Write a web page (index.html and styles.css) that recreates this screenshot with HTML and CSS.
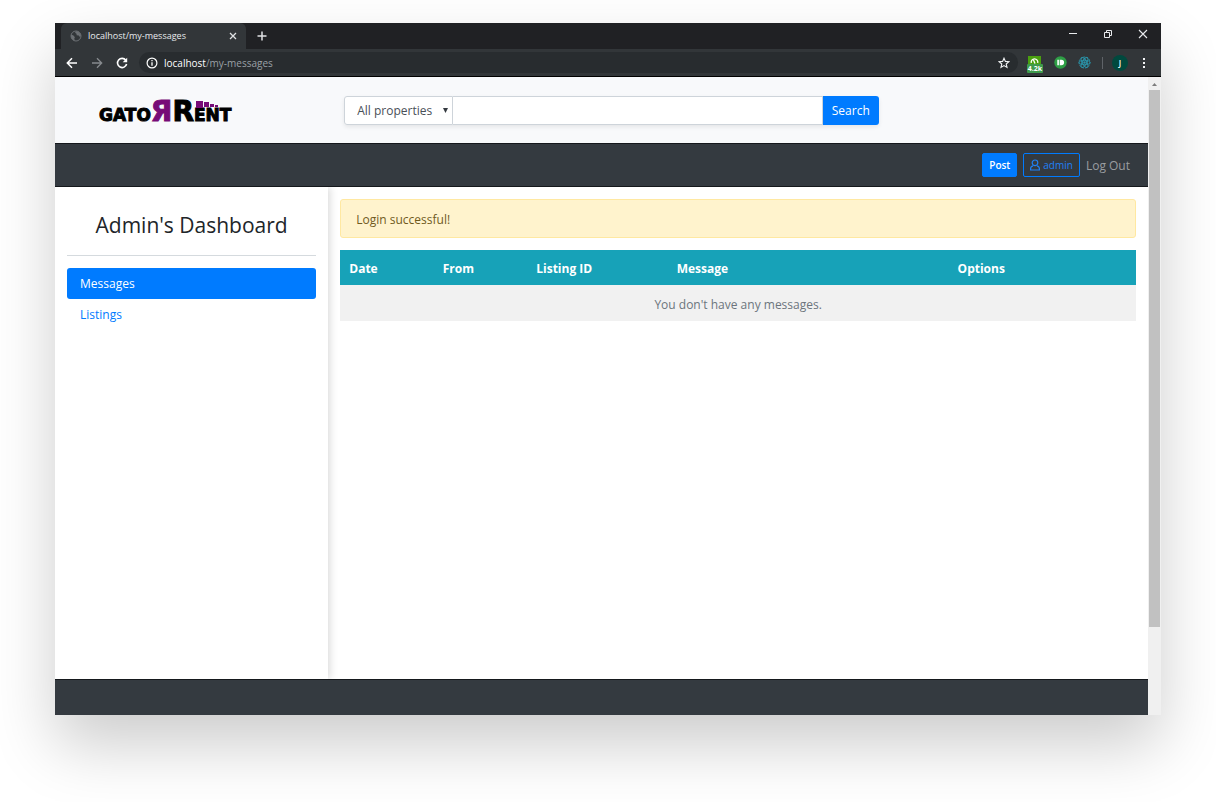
FILE: index.html
```html
<!DOCTYPE html>
<html lang="en">
<head>
<meta charset="utf-8">
<meta name="viewport" content="width=device-width, initial-scale=1">
<title>GatorRent - Messages</title>
<link rel="stylesheet" href="styles.css">
</head>
<body>
<div class="window">
  <div class="tabstrip">
    <div class="tab">
      <svg class="tab-icon" width="12" height="12" viewBox="0 0 12 12"><circle cx="6" cy="6" r="5" fill="none" stroke="#6c7074"/><path d="M1.200 4.500l2.300 1 1.400 1.800-.6 1.200.5 2.200C2.500 10.200 1 8.300 1 6zM6 1.200l-1 1.600 1.500 1 .2 1.400 2 .3 1.200 1.500 1-1.300C10.700 3 8.600 1.300 6 1.200z" fill="#6c7074"/></svg>
      <span class="tab-title">localhost/my-messages</span>
      <button class="icon-btn" aria-label="Close tab"><svg width="8" height="8" viewBox="0 0 8 8"><path d="M1 1l6 6M7 1L1 7" stroke="#dfe1e3" stroke-width="1.300"/></svg></button>
    </div>
    <button class="icon-btn new-tab" aria-label="New tab"><svg width="10" height="10" viewBox="0 0 10 10"><path d="M5 .5v9M.5 5h9" stroke="#dfe1e3" stroke-width="1.500"/></svg></button>
    <div class="window-controls">
      <button class="icon-btn" aria-label="Minimize"><svg width="10" height="10" viewBox="0 0 10 10"><path d="M1 4.500h8" stroke="#e8eaed"/></svg></button>
      <button class="icon-btn" aria-label="Restore"><svg width="10" height="10" viewBox="0 0 10 10"><path d="M1.500 3.500h5v5h-5zM3.500 3.500v-2h5v5h-2" fill="none" stroke="#e8eaed"/></svg></button>
      <button class="icon-btn" aria-label="Close"><svg width="10" height="10" viewBox="0 0 10 10"><path d="M1 1l8 8M9 1L1 9" stroke="#e8eaed" stroke-width="1.100"/></svg></button>
    </div>
  </div>
  <div class="toolbar">
    <div class="nav-buttons">
      <button class="icon-btn" aria-label="Back"><svg width="12" height="12" viewBox="0 0 12 12"><path d="M11 6H1.500M6 1.200L1.300 6 6 10.800" fill="none" stroke="#fff" stroke-width="1.500"/></svg></button>
      <button class="icon-btn" aria-label="Forward"><svg width="12" height="12" viewBox="0 0 12 12"><path d="M1 6h9.500M6 1.200L10.700 6 6 10.800" fill="none" stroke="#878b8f" stroke-width="1.300"/></svg></button>
      <button class="icon-btn" aria-label="Reload"><svg width="12" height="12" viewBox="0 0 12 12"><path d="M9.800 3.200A4.600 4.600 0 1 0 10.600 7" fill="none" stroke="#fff" stroke-width="1.600"/><path d="M11.200.8v4.500H6.700z" fill="#fff"/></svg></button>
    </div>
    <div class="address">
      <svg width="12" height="12" viewBox="0 0 12 12"><circle cx="6" cy="6" r="4.900" fill="none" stroke="#fff" stroke-width="1.200"/><path d="M6 5.200v3.600M6 3v1.300" stroke="#fff" stroke-width="1.300"/></svg>
      <span class="url"><span class="host">localhost</span>/my-messages</span>
      <button class="icon-btn" aria-label="Bookmark"><svg width="12" height="12" viewBox="0 0 12 12"><path d="M6 1.200l1.400 3.200 3.500.3-2.700 2.300.8 3.400-3-1.800-3 1.800.8-3.400L1.100 4.700l3.500-.3z" fill="none" stroke="#f1f3f4" stroke-width="1.100"/></svg></button>
    </div>
    <div class="extensions">
      <div class="ext-meter">
        <svg width="13" height="8" viewBox="0 0 13 8"><path d="M0 0h13v8H0z" fill="#4aa00f"/><path d="M3.300 7A3.300 3.300 0 1 1 9.700 7" fill="none" stroke="#fff" stroke-width="1.300"/><path d="M7 7.500L5.300 3.500" stroke="#fff" stroke-width="1.300"/></svg>
        <span class="badge">4.2k</span>
      </div>
      <svg width="13" height="13" viewBox="0 0 13 13"><circle cx="6.500" cy="6.500" r="6.200" fill="#2e9e45"/><path d="M3.300 3.700h1.600v5.600H3.300zM5.700 3.700h1.600a2.800 2.800 0 0 1 0 5.600H5.700z" fill="#fff"/></svg>
      <svg width="13" height="13" viewBox="0 0 13 13"><g fill="none" stroke="#2a93a8" stroke-width="1"><circle cx="6.500" cy="6.500" r="5.500" stroke-dasharray="2 1"/><ellipse cx="6.500" cy="6.500" rx="5.500" ry="2.200"/><ellipse cx="6.500" cy="6.500" rx="5.500" ry="2.200" transform="rotate(60 6.500 6.500)"/><ellipse cx="6.500" cy="6.500" rx="5.500" ry="2.200" transform="rotate(120 6.500 6.500)"/></g><circle cx="6.500" cy="6.500" r="1.200" fill="#2a93a8"/></svg>
      <span class="divider"></span>
      <span class="avatar">J</span>
      <button class="icon-btn menu-btn" aria-label="Menu"><svg width="4" height="12" viewBox="0 0 4 12"><path d="M1 1h2v2H1zM1 5h2v2H1zM1 9h2v2H1z" fill="#f1f3f4"/></svg></button>
    </div>
  </div>
  <div class="viewport">
    <div class="page">
      <header class="site-header">
        <a class="logo" href="#" aria-label="GatorRent">GATO<span class="big purple">Я</span><span class="big">R</span><span class="logo-end">ENT<svg class="pixels" width="24" height="8" viewBox="0 0 24 8"><path d="M0 0h7v7H0zM8 1h5v5H8zM14 3h4v3h-4zM19 4h3v2h-3z" fill="#770b77"/></svg></span></a>
        <form class="search">
          <select class="search-type" aria-label="Property type"><option>All properties</option></select>
          <svg class="caret" width="5" height="5" viewBox="0 0 5 5"><path d="M0 0h5L2.500 5z" fill="#343a40"/></svg>
          <input class="search-input" type="text" aria-label="Search">
          <button class="search-btn" type="button">Search</button>
        </form>
      </header>
      <nav class="user-nav">
        <a class="btn btn-solid" href="#">Post</a>
        <a class="btn btn-outline" href="#"><svg width="10" height="12" viewBox="0 0 10 12"><path d="M5 1a2.800 2.800 0 1 1 0 5.600A2.800 2.800 0 0 1 5 1zM3 6.800C1.500 7.200.6 8.200.6 9.700V11h8.800V9.700c0-1.500-.9-2.500-2.400-2.900" fill="none" stroke="currentColor" stroke-width="1.200"/></svg>admin</a>
        <a class="logout" href="#">Log Out</a>
      </nav>
      <div class="content">
        <aside class="sidebar">
          <h1 class="title">Admin's Dashboard</h1>
          <a class="side-link active" href="#">Messages</a>
          <a class="side-link" href="#">Listings</a>
        </aside>
        <main class="main">
          <div class="alert" role="alert">Login successful!</div>
          <table class="messages">
            <colgroup><col class="c2"><col class="c2"><col class="c3"><col class="c6"><col class="c4"></colgroup>
            <thead><tr><th>Date</th><th>From</th><th>Listing ID</th><th>Message</th><th>Options</th></tr></thead>
            <tbody><tr><td colspan="5">You don't have any messages.</td></tr></tbody>
          </table>
        </main>
      </div>
      <footer class="footer"></footer>
    </div>
    <div class="scrollbar">
      <svg class="scroll-arrow" width="5" height="3" viewBox="0 0 5 3"><path d="M0 3h5L2.500 0z" fill="#7d7d7d"/></svg>
      <div class="thumb"></div>
    </div>
  </div>
</div>
</body>
</html>
```

FILE: styles.css
```css
* { box-sizing: border-box; }

body {
  margin: 0;
  min-height: 100vh;
  display: flex;
  padding: 23px 55px 87px;
  background: #fff;
  color: #212529;
  font-family: "Open Sans", "Noto Sans", sans-serif;
  font-size: 12px;
  line-height: 18px;
}

a { text-decoration: none; }
svg { flex: none; display: block; }

.window {
  flex: 1;
  display: flex;
  flex-direction: column;
  box-shadow: 0 30px 60px rgba(0, 0, 0, 0.2);
}

.icon-btn {
  display: flex;
  padding: 0;
  border: 0;
  background: none;
}

/* Browser frame */
.tabstrip {
  display: flex;
  align-items: center;
  height: 26px;
  padding: 0 13px 0 6px;
  background: #202124;
}

.tab {
  display: flex;
  align-items: center;
  align-self: stretch;
  width: 185px;
  padding: 0 9px;
  border-radius: 6px 6px 0 0;
  background: #323639;
}

.tab-title {
  flex: 1;
  padding-left: 6px;
  color: #e8eaed;
  font-size: 9px;
}

.new-tab { margin-left: 11px; }

.window-controls {
  display: flex;
  gap: 25px;
  margin-left: auto;
  padding-bottom: 4px;
}

.toolbar {
  display: flex;
  align-items: center;
  height: 28px;
  border-bottom: 1px solid #000;
  padding: 0 15px 0 11px;
  background: #323639;
}

.nav-buttons { display: flex; gap: 13px; }

.address {
  flex: 1;
  display: flex;
  align-items: center;
  height: 21px;
  margin-left: 11px;
  padding: 0 8px 0 7px;
  border-radius: 11px;
  background: #282c2f;
}

.url {
  flex: 1;
  padding-left: 6px;
  color: #9aa0a6;
  font-size: 10px;
}

.host { color: #fff; }

.extensions {
  display: flex;
  align-items: center;
  gap: 11px;
  margin-left: 9px;
}

.ext-meter {
  display: flex;
  flex-direction: column;
  align-items: center;
  padding-top: 3px;
}

.badge {
  padding: 0 1px;
  border-radius: 1px;
  background: #3f9a4c;
  color: #fff;
  font-size: 7px;
  font-weight: 700;
  line-height: 9px;
}

.divider {
  width: 1px;
  height: 12px;
  background: #5f6368;
}

.avatar {
  width: 16px;
  margin-left: -2px;
  border-radius: 50%;
  background: #00493e;
  color: #fff;
  font-size: 8px;
  font-weight: 600;
  line-height: 16px;
  text-align: center;
}

.menu-btn { margin-left: 3px; }

/* Page area */
.viewport { flex: 1; display: flex; }

.page {
  flex: 1;
  display: flex;
  flex-direction: column;
  background: #fff;
}

.scrollbar {
  display: flex;
  flex-direction: column;
  align-items: center;
  width: 13px;
  padding: 6px 1px 0;
  background: #f0f0f0;
}

.thumb {
  width: 100%;
  height: 85%;
  margin-top: 4px;
  background: #c1c1c1;
}

.site-header {
  display: grid;
  grid-template-columns: 25% 50%;
  align-items: center;
  height: 66px;
  background: #f8f9fb;
}

.logo {
  margin-left: 44px;
  padding-top: 6px;
  color: #000;
  font-family: "DejaVu Sans", sans-serif;
  font-size: 17px;
  font-weight: 700;
  line-height: 32px;
  white-space: nowrap;
  -webkit-text-stroke: 1px currentColor;
}

.big { font-size: 28px; }
.purple { color: #770b77; }
.logo-end { position: relative; }

.pixels {
  position: absolute;
  left: 2px;
  top: -4px;
}

.search {
  position: relative;
  display: flex;
  height: 29px;
  margin-left: 16px;
  margin-right: -4px;
  border-radius: 3px;
  box-shadow: 0 2px 4px rgba(0, 0, 0, 0.08);
}

.search-type,
.search-input {
  border: 1px solid #ced4da;
  background: #fff;
  color: #495057;
  font: inherit;
}

.search-type {
  width: 109px;
  padding: 2px 12px 0;
  border-radius: 3px 0 0 3px;
  appearance: none;
}

.caret {
  position: absolute;
  left: 99px;
  top: 12px;
}

.search-input {
  flex: 1;
  min-width: 0;
  border-left: 0;
}

.search-btn {
  padding: 2px 9px 0;
  border: 0;
  border-radius: 0 3px 3px 0;
  background: #007bff;
  color: #fff;
  font: inherit;
}

.user-nav {
  display: flex;
  justify-content: flex-end;
  align-items: center;
  gap: 6px;
  height: 44px;
  padding-right: 18px;
  border: 1px solid #15181c;
  border-width: 1px 0;
  background: #343a40;
}

.btn {
  display: flex;
  align-items: center;
  gap: 3px;
  height: 24px;
  padding: 0 6px;
  border: 1px solid #007bff;
  border-radius: 2px;
  font-size: 10px;
}

.btn-solid { background: #007bff; color: #fff; font-weight: 600; }
.btn-outline { color: #1f80f5; }
.logout { padding-top: 1px; color: #9a9da0; }

.content {
  flex: 1;
  display: grid;
  grid-template-columns: 25% 75%;
}

.sidebar {
  padding: 12px;
  box-shadow: 2px 0 8px rgba(0, 0, 0, 0.15);
  clip-path: inset(0 -12px 0 0);
}

.title {
  margin: 0 0 12px;
  padding: 12px 0 16px;
  border-bottom: 1px solid #d5dade;
  font-size: 21px;
  font-weight: 400;
  line-height: 28px;
  text-align: center;
}

.side-link {
  display: block;
  padding: 7px 13px 6px;
  border-radius: 3px;
  color: #007bff;
}

.side-link.active { background: #007bff; color: #fff; }

.main { padding: 12px; }

.alert {
  margin-bottom: 12px;
  padding: 11px 15px 9px;
  border: 1px solid #ffe8a1;
  border-radius: 3px;
  background: #fff3cd;
  color: #6f5a1e;
  line-height: 17px;
}

.messages {
  width: 100%;
  border-collapse: collapse;
  table-layout: fixed;
}

.c2 { width: 11.75%; }
.c3 { width: 17.65%; }
.c6 { width: 35.3%; }
.c4 { width: 23.55%; }

.messages th {
  height: 35px;
  padding: 2px 9px 0;
  background: #17a2b8;
  color: #fff;
  text-align: left;
}

.messages td {
  height: 36px;
  padding: 3px 9px 0;
  background: #f1f1f1;
  color: #6c757d;
  text-align: center;
}

.footer {
  height: 36px;
  border-top: 1px solid #15181c;
  background: #343a40;
}
```
